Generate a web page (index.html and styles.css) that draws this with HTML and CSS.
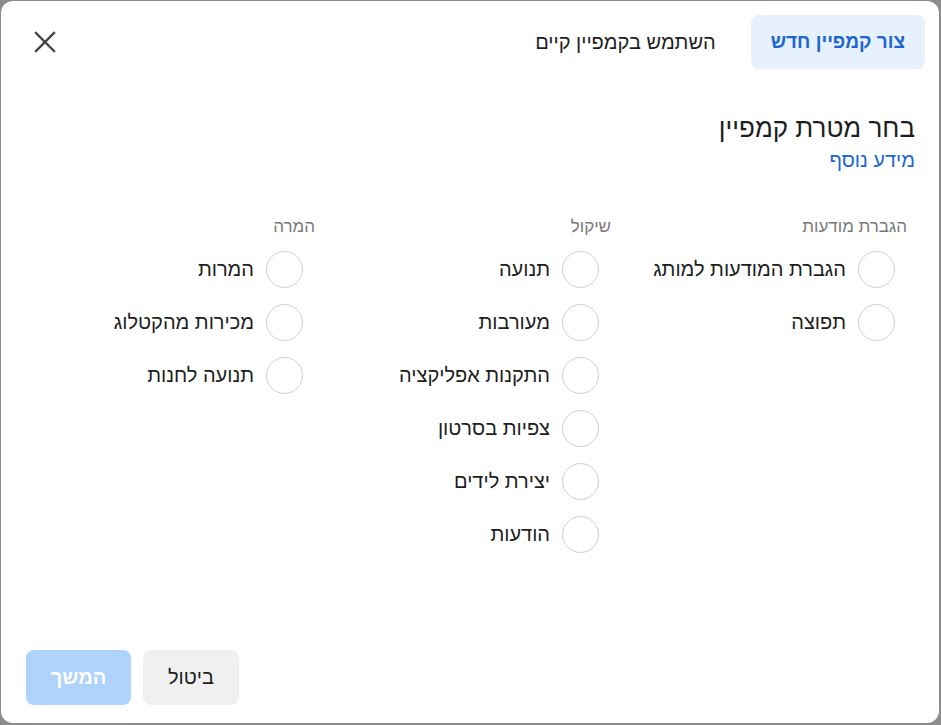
FILE: index.html
```html
<!DOCTYPE html>
<html lang="he" dir="rtl">
<head>
  <meta charset="UTF-8" />
  <title>בחר מטרת קמפיין</title>
  <link rel="stylesheet" href="styles.css">
</head>
<body>
  <div class="dialog">
    <div class="header">
      <button class="tab active">צור קמפיין חדש</button>
      <button class="tab">השתמש בקמפיין קיים</button>
      <button class="close" aria-label="סגור">
        <svg width="22" height="22" viewBox="0 0 22 22">
          <path d="M2 2 L20 20 M20 2 L2 20" stroke="#444" stroke-width="2.4" stroke-linecap="square" fill="none"/>
        </svg>
      </button>
    </div>

    <div class="content">
      <h1>בחר מטרת קמפיין</h1>
      <a class="more" href="#">מידע נוסף</a>

      <div class="columns">
        <div class="column">
          <div class="col-title">הגברת מודעות</div>
          <label class="option"><span class="radio"></span>הגברת המודעות למותג</label>
          <label class="option"><span class="radio"></span>תפוצה</label>
        </div>
        <div class="column">
          <div class="col-title">שיקול</div>
          <label class="option"><span class="radio"></span>תנועה</label>
          <label class="option"><span class="radio"></span>מעורבות</label>
          <label class="option"><span class="radio"></span>התקנות אפליקציה</label>
          <label class="option"><span class="radio"></span>צפיות בסרטון</label>
          <label class="option"><span class="radio"></span>יצירת לידים</label>
          <label class="option"><span class="radio"></span>הודעות</label>
        </div>
        <div class="column">
          <div class="col-title">המרה</div>
          <label class="option"><span class="radio"></span>המרות</label>
          <label class="option"><span class="radio"></span>מכירות מהקטלוג</label>
          <label class="option"><span class="radio"></span>תנועה לחנות</label>
        </div>
      </div>
    </div>

    <div class="footer">
      <button class="btn cancel">ביטול</button>
      <button class="btn next" disabled>המשך</button>
    </div>
  </div>
</body>
</html>
```

FILE: styles.css
```css
* {
  box-sizing: border-box;
}
html, body {
  height: 100%;
}
body {
  margin: 0;
  background: #8c8c8c;
  font-family: 'Liberation Sans', Arial, sans-serif;
  color: #1c1e21;
}

.dialog {
  direction: rtl;
  margin: 1px 2px 0 1px;
  height: 722px;
  background: #ffffff;
  border-radius: 12px;
  display: flex;
  flex-direction: column;
}

.header {
  display: flex;
  align-items: center;
  padding: 14px 14px 0 14px;
}

button {
  font-family: inherit;
  border: none;
  background: none;
  cursor: pointer;
}

.tab {
  height: 54px;
  padding: 0 18px;
  font-size: 20px;
  color: #1c1e21;
  border-radius: 8px;
}
.tab.active {
  padding: 0 20px;
  background: #e7f0fd;
  color: #1b66d0;
  font-weight: bold;
  font-size: 19px;
  margin-left: 17px;
}

.close {
  margin-right: auto;
  margin-left: 19px;
  padding: 0;
  width: 22px;
  height: 22px;
  display: flex;
}

.content {
  flex: 1;
  padding: 0 24px 0 24px;
}

h1 {
  margin: 43px 0 0;
  font-size: 26px;
  font-weight: normal;
  line-height: 32px;
}

.more {
  display: inline-block;
  margin-top: 3px;
  font-size: 20px;
  line-height: 26px;
  color: #1b66d0;
  text-decoration: none;
}

.columns {
  display: flex;
  margin-top: 43px;
  padding-right: 8px;
}

.column {
  flex: none;
  width: 296px;
}

.col-title {
  font-size: 17px;
  line-height: 22px;
  color: #7a7a7a;
  margin-bottom: 5px;
}

.option {
  display: flex;
  align-items: center;
  gap: 12px;
  height: 53px;
  padding-right: 12px;
  font-size: 20px;
  cursor: pointer;
}

.radio {
  width: 37px;
  height: 37px;
  border: 1px solid #cfcfcf;
  border-radius: 50%;
  flex-shrink: 0;
}

.footer {
  display: flex;
  flex-direction: row-reverse;
  justify-content: flex-end;
  gap: 12px;
  padding: 0 25px 18px;
  direction: ltr;
}

.btn {
  height: 55px;
  border-radius: 8px;
  font-size: 20px;
}
.cancel {
  width: 96px;
  background: #f0f0f0;
  color: #1c1e21;
}
.next {
  width: 105px;
  background: #aed3fd;
  color: #ffffff;
  font-weight: bold;
  cursor: default;
}
```
